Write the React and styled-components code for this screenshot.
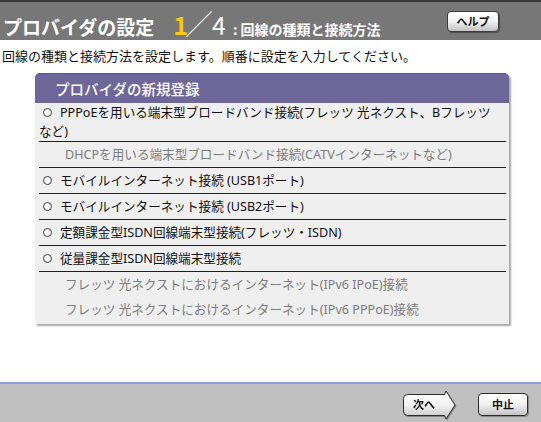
import styled, { createGlobalStyle } from "styled-components";

const GlobalStyle = createGlobalStyle`
  html, body {
    margin: 0;
    padding: 0;
    background: #ffffff;
  }
  body {
    font-family: "Noto Sans CJK JP", "Noto Sans", sans-serif;
    color: #111111;
  }
`;

const options = [
  { label: "PPPoEを用いる端末型ブロードバンド接続(フレッツ 光ネクスト、Bフレッツなど)", line: true },
  { label: "DHCPを用いる端末型ブロードバンド接続(CATVインターネットなど)", disabled: true, line: true },
  { label: "モバイルインターネット接続 (USB1ポート)", line: true },
  { label: "モバイルインターネット接続 (USB2ポート)", line: true },
  { label: "定額課金型ISDN回線端末型接続(フレッツ・ISDN)", line: true },
  { label: "従量課金型ISDN回線端末型接続", line: true },
  { label: "フレッツ 光ネクストにおけるインターネット(IPv6 IPoE)接続", disabled: true },
  { label: "フレッツ 光ネクストにおけるインターネット(IPv6 PPPoE)接続", disabled: true },
];

export default function App() {
  return (
    <>
      <GlobalStyle />
      <Page>
        <Header>
          <Title>プロバイダの設定</Title>
          <Step>
            <StepNum $current>1</StepNum>
            <Slash>／</Slash>
            <StepNum>4</StepNum>
          </Step>
          <SubTitle>
            <Colon>:</Colon>回線の種類と接続方法
          </SubTitle>
          <HelpButton>ヘルプ</HelpButton>
        </Header>

        <Intro>回線の種類と接続方法を設定します。順番に設定を入力してください。</Intro>

        <Panel>
          <PanelTitle>プロバイダの新規登録</PanelTitle>
          <RowList>
            {options.map((o) => (
              <Row key={o.label} $line={o.line} $disabled={o.disabled}>
                <RowText>
                  {!o.disabled && <Radio />}
                  {o.label}
                </RowText>
              </Row>
            ))}
          </RowList>
        </Panel>

        <Footer>
          <NextButton>
            <svg width="54" height="30" viewBox="0 0 54 30">
              <defs>
                <linearGradient id="nextFill" x1="0" y1="0" x2="0" y2="1">
                  <stop offset="0" stopColor="#ffffff" />
                  <stop offset="0.5" stopColor="#f2f2f2" />
                  <stop offset="1" stopColor="#c4c4c4" />
                </linearGradient>
              </defs>
              <path
                d="M5.5 4.5 H42.5 L44 1 L53 15 L44 29 L42.5 25.5 H5.5 Q1.5 25.5 1.5 21.5 V8.5 Q1.5 4.5 5.5 4.5 Z"
                fill="url(#nextFill)"
                stroke="#2c2c2c"
                strokeWidth="1"
                strokeLinejoin="round"
              />
            </svg>
            <NextLabel>次へ</NextLabel>
          </NextButton>
          <StopButton>中止</StopButton>
        </Footer>
      </Page>
    </>
  );
}

const Page = styled.div`
  height: 422px;
  display: flex;
  flex-direction: column;
`;

const Header = styled.header`
  height: 40px;
  box-sizing: border-box;
  border-top: 2px solid #383838;
  background: #777777;
  display: flex;
  align-items: baseline;
  padding: 7px 0 0 3px;
  color: #ffffff;
`;

const Title = styled.h1`
  margin: 0;
  font-size: 19px;
  font-weight: 700;
  line-height: 1;
`;

const Step = styled.div`
  display: flex;
  align-items: baseline;
  margin-left: 19px;
`;

const StepNum = styled.span`
  font-size: 25px;
  line-height: 1;
  font-weight: ${(p) => (p.$current ? 700 : 400)};
  color: ${(p) => (p.$current ? "#f7c815" : "#ffffff")};
`;

const Slash = styled.span`
  font-size: 28px;
  line-height: 1;
  font-weight: 300;
  color: #f0f0f0;
  margin: 0 -1px 0 -3px;
`;

const SubTitle = styled.span`
  font-size: 14px;
  font-weight: 700;
  line-height: 1;
  margin-left: 7px;
`;

const Colon = styled.span`
  margin-right: 3px;
`;

const HelpButton = styled.button`
  align-self: flex-start;
  margin: 2px 42px 0 auto;
  width: 52px;
  height: 21px;
  padding: 0;
  border: 1px solid #3c3c3c;
  border-radius: 4px;
  background: linear-gradient(#ffffff 0%, #f1f1f1 50%, #c2c2c2 100%);
  box-shadow: 1px 1px 1px rgba(0, 0, 0, 0.35);
  font-family: inherit;
  font-size: 11px;
  font-weight: 700;
  color: #111111;
  line-height: 19px;
`;

const Intro = styled.p`
  margin: 6px 0 0;
  padding: 0 2px;
  font-size: 13px;
  line-height: 20px;
`;

const Panel = styled.section`
  margin: 7px 0 0 35px;
  width: 474px;
  background: #efefef;
  border-radius: 5px 5px 0 0;
  box-shadow: 2px 2px 2px rgba(0, 0, 0, 0.35);
`;

const PanelTitle = styled.h2`
  margin: 0;
  height: 30px;
  padding-left: 20px;
  border-radius: 5px 5px 0 0;
  background: #6e6799;
  border-top: 1px solid #5b5487;
  box-sizing: border-box;
  color: #ffffff;
  font-size: 14.5px;
  font-weight: 500;
  line-height: 29px;
`;

const RowList = styled.div`
  padding: 0 3px 2px 4px;
`;

const Row = styled.div`
  display: flex;
  align-items: center;
  min-height: 25px;
  border-bottom: ${(p) => (p.$line ? "1px solid #1e1e1e" : "none")};
  padding-left: ${(p) => (p.$disabled ? "26px" : "0")};
  color: ${(p) => (p.$disabled ? "#7d7d7d" : "#111111")};
`;

const RowText = styled.div`
  max-width: 460px;
  font-family: "Noto Sans", "Noto Sans CJK JP", sans-serif;
  font-size: 12.6px;
  line-height: 19px;
`;

const Radio = styled.span`
  display: inline-block;
  width: 7px;
  height: 7px;
  margin: 0 8px 0 4px;
  border: 1px solid #3a3a3a;
  border-radius: 50%;
  background: #ffffff;
  vertical-align: 0;
`;

const Footer = styled.footer`
  margin-top: auto;
  height: 40px;
  box-sizing: border-box;
  border-top: 2px solid #86a2d6;
  background: #c0c0c0;
  display: flex;
  justify-content: flex-end;
  align-items: center;
  gap: 22px;
  padding: 3px 13px 0 0;
`;

const NextButton = styled.div`
  display: grid;
  width: 54px;
  height: 30px;
  filter: drop-shadow(1px 1px 0 rgba(0, 0, 0, 0.3));

  & > * {
    grid-area: 1 / 1;
  }
`;

const NextLabel = styled.span`
  align-self: center;
  justify-self: start;
  width: 44px;
  text-align: center;
  font-size: 11px;
  font-weight: 700;
  color: #111111;
  line-height: 1;
`;

const StopButton = styled.button`
  width: 50px;
  height: 23px;
  padding: 0;
  border: 1px solid #2c2c2c;
  border-radius: 4px;
  background: linear-gradient(#ffffff 0%, #f1f1f1 50%, #c4c4c4 100%);
  box-shadow: 1px 1px 1px rgba(0, 0, 0, 0.3);
  font-family: inherit;
  font-size: 11px;
  font-weight: 700;
  color: #111111;
  line-height: 21px;
`;
